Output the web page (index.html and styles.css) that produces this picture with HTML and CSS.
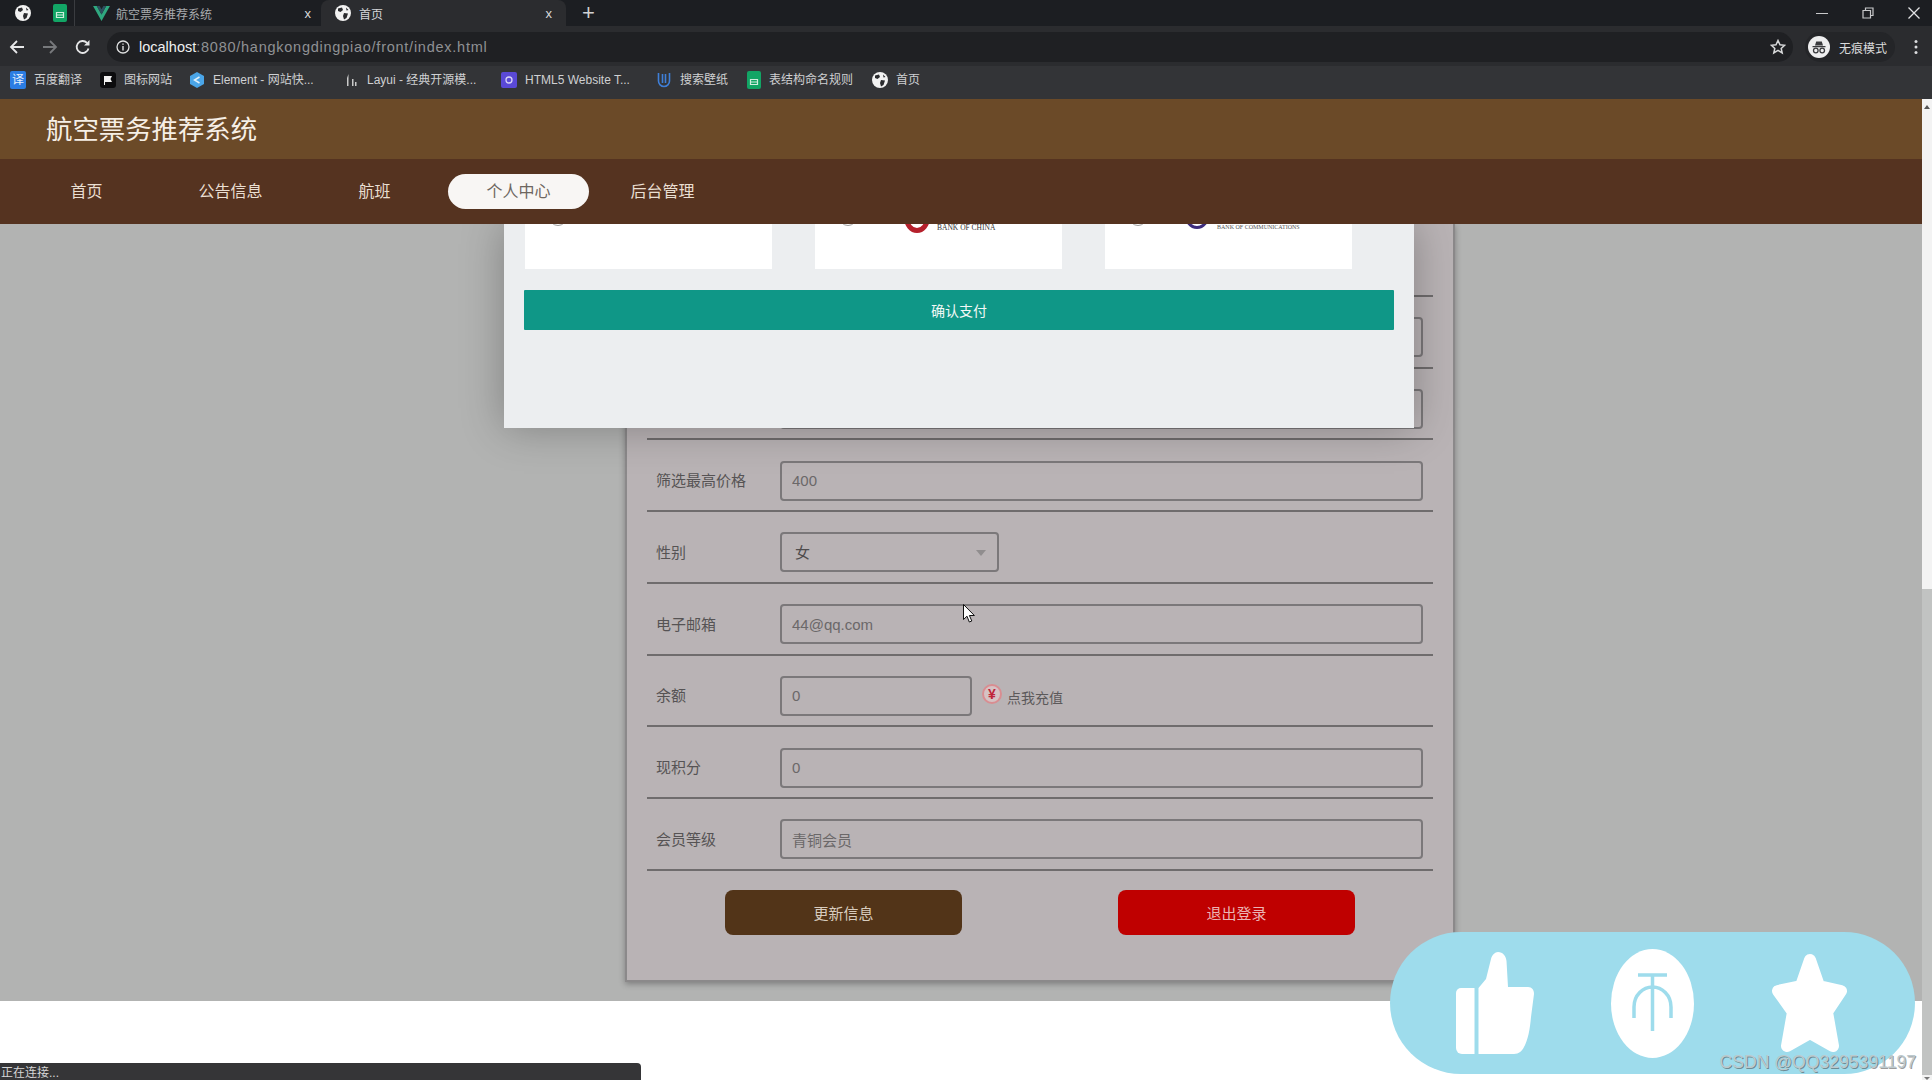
FILE: index.html
```html
<!DOCTYPE html>
<html lang="zh-CN">
<head>
  <meta charset="UTF-8">
  <title>首页</title>
  <link rel="stylesheet" href="styles.css">
</head>
<body>
  <svg class="defs" width="0" height="0">
    <symbol id="globe" viewBox="0 0 16 16">
      <circle cx="8" cy="8" r="8" fill="#f2f2f2"/>
      <path d="M3 3.5 7 2.5 8 5 5.5 7 3 6ZM9 8l4 .5-1.5 4.5-2.5 1.5-1-3.5ZM11 2.5l2.5 2.5-2 .5Z" fill="#2a2b2e"/>
    </symbol>
    <symbol id="sheet" viewBox="0 0 14 18">
      <rect width="14" height="18" rx="2" fill="#12a565"/>
      <path d="M3.5 8.5h7v5h-7z" fill="none" stroke="#cfeedd" stroke-width="1.2"/>
      <path d="M3.5 11h7" stroke="#cfeedd" stroke-width="1"/>
    </symbol>
  </svg>

  <div class="tabstrip">
    <div class="pin pin-first"><svg class="ico16" viewBox="0 0 16 16"><use href="#globe"/></svg></div>
    <div class="pin pin-second"><svg class="ico-sheet" viewBox="0 0 14 18"><use href="#sheet"/></svg></div>
    <div class="tab tab-vue">
      <svg class="ico-vue" viewBox="0 0 18 16"><path d="M0 0h4l5 9 5-9h4L9 16Z" fill="#2fa87f"/><path d="M4 0h3l2 3.5L11 0h3L9 9Z" fill="#2d4f5e"/></svg>
      <span class="tab-title">航空票务推荐系统</span>
      <span class="tab-close">x</span>
    </div>
    <div class="tab tab-active">
      <svg class="ico16" viewBox="0 0 16 16"><use href="#globe"/></svg>
      <span class="tab-title tab-title-active">首页</span>
      <span class="tab-close">x</span>
    </div>
    <div class="tab-new">+</div>
    <div class="win-controls">
      <svg class="win-btn" viewBox="0 0 12 12"><path d="M0 6.500h12" stroke="#c8c9cb" stroke-width="1"/></svg>
      <svg class="win-btn" viewBox="0 0 12 12"><path d="M1 3.500h7.500v7.500H1zM3.500 3.500V1H11v7.500H8.500" fill="none" stroke="#c8c9cb" stroke-width="1.200"/></svg>
      <svg class="win-btn" viewBox="0 0 12 12"><path d="M.5.500l11 11M11.500.500l-11 11" stroke="#e2e3e5" stroke-width="1.300"/></svg>
    </div>
  </div>

  <div class="toolbar">
    <svg class="nav-ico" viewBox="0 0 16 16"><path d="M15 8H2M8 2 2 8l6 6" fill="none" stroke="#e6e7e8" stroke-width="1.800"/></svg>
    <svg class="nav-ico" viewBox="0 0 16 16"><path d="M1 8h13M8 2l6 6-6 6" fill="none" stroke="#77797c" stroke-width="1.800"/></svg>
    <svg class="nav-ico" viewBox="0 0 16 16"><path d="M13.500 9.500A6 6 0 1 1 12 3.800" fill="none" stroke="#e6e7e8" stroke-width="1.800"/><path d="M14.500 1v5.500H9z" fill="#e6e7e8"/></svg>
    <div class="addressbar">
      <svg class="info-ico" viewBox="0 0 14 14"><circle cx="7" cy="7" r="6" fill="none" stroke="#dfe0e1" stroke-width="1.300"/><path d="M7 6v4.500M7 3.500v1.300" stroke="#dfe0e1" stroke-width="1.400"/></svg>
      <span class="url"><b>localhost</b><span class="url-rest">:8080/hangkongdingpiao/front/index.html</span></span>
      <svg class="star-ico" viewBox="0 0 16 16"><path d="M8 1.500l2 4.300 4.600.5-3.400 3.100 1 4.600L8 11.300l-4.200 2.700 1-4.600L1.400 6.300 6 5.800Z" fill="none" stroke="#d8d9da" stroke-width="1.500"/></svg>
    </div>
    <div class="incognito">
      <svg class="incog-ico" viewBox="0 0 22 22"><circle cx="11" cy="11" r="11" fill="#eeeeef"/><path d="M7 9.500l1.200-4h5.600l1.200 4zM4.500 10h13v1.200h-13z" fill="#3a3b3e"/><circle cx="7.800" cy="14.500" r="2.300" fill="none" stroke="#3a3b3e" stroke-width="1.300"/><circle cx="14.200" cy="14.500" r="2.300" fill="none" stroke="#3a3b3e" stroke-width="1.300"/></svg>
      <span>无痕模式</span>
    </div>
    <svg class="menu-ico" viewBox="0 0 4 16"><circle cx="2" cy="2.500" r="1.500" fill="#dcdddf"/><circle cx="2" cy="8" r="1.500" fill="#dcdddf"/><circle cx="2" cy="13.500" r="1.500" fill="#dcdddf"/></svg>
  </div>

  <div class="bookmarks">
    <div class="bm bm-1"><span class="bm-fy">译</span><span>百度翻译</span></div>
    <div class="bm bm-2"><svg class="ico16" viewBox="0 0 16 16"><rect width="16" height="16" rx="3" fill="#0c0c0e"/><path d="M4 4h8l-1.500 3L12 10H5v3H4z" fill="#f1f1f1"/></svg><span>图标网站</span></div>
    <div class="bm bm-3"><svg class="ico16" viewBox="0 0 16 16"><path d="M8 0l7 4v8l-7 4-7-4V4z" fill="#4aa5e8"/><path d="M10.500 5 5.500 8l5 3" fill="none" stroke="#dff0fb" stroke-width="1.500"/></svg><span>Element - 网站快...</span></div>
    <div class="bm bm-4"><svg class="ico16" viewBox="0 0 16 16"><path d="M4 14V6l1.500-4v12zM9 14V7h1.500v7zM12 14v-4h1.500v4z" fill="#c9c9c9"/></svg><span>Layui - 经典开源模...</span></div>
    <div class="bm bm-5"><svg class="ico16" viewBox="0 0 16 16"><rect width="16" height="16" rx="2" fill="#5a49d6"/><circle cx="8" cy="8" r="3" fill="none" stroke="#d8d3f7" stroke-width="1.300"/></svg><span>HTML5 Website T...</span></div>
    <div class="bm bm-6"><svg class="ico16" viewBox="0 0 16 16"><path d="M2.500 1v8a5.500 5.500 0 0 0 11 0V1M6.500 2v9M9.500 2v9" fill="none" stroke="#3f7fd8" stroke-width="1.600"/></svg><span>搜索壁纸</span></div>
    <div class="bm bm-7"><svg class="ico-sheet" viewBox="0 0 14 18"><use href="#sheet"/></svg><span>表结构命名规则</span></div>
    <div class="bm"><svg class="ico16" viewBox="0 0 16 16"><use href="#globe"/></svg><span>首页</span></div>
  </div>

  <div class="page">
    <div class="page-main">
      <div class="site-title">航空票务推荐系统</div>
      <div class="site-nav">
        <a class="nav-item">首页</a>
        <a class="nav-item">公告信息</a>
        <a class="nav-item">航班</a>
        <a class="nav-item nav-item-on">个人中心</a>
        <a class="nav-item">后台管理</a>
      </div>

      <div class="content">
        <div class="card">
          <div class="row"></div>
          <div class="row"><input class="field" readonly></div>
          <div class="row"><input class="field" readonly></div>
          <div class="row"><label class="row-label">筛选最高价格</label><input class="field" value="400" readonly></div>
          <div class="row">
            <label class="row-label">性别</label>
            <div class="select-wrap"><select class="field field-select"><option>女</option></select></div>
          </div>
          <div class="row"><label class="row-label">电子邮箱</label><input class="field" value="44@qq.com" readonly></div>
          <div class="row">
            <label class="row-label">余额</label>
            <input class="field field-short" value="0" readonly>
            <span class="yuan">¥</span>
            <span class="recharge">点我充值</span>
          </div>
          <div class="row"><label class="row-label">现积分</label><input class="field" value="0" readonly></div>
          <div class="row"><label class="row-label">会员等级</label><input class="field" value="青铜会员" readonly></div>
          <div class="card-actions">
            <button class="btn btn-brown">更新信息</button>
            <button class="btn btn-red">退出登录</button>
          </div>
          <svg class="cursor" viewBox="0 0 12 19"><path d="M.5.500v15l3.500-3.300 2.300 5.800 2.500-1-2.400-5.500h5z" fill="#fff" stroke="#111" stroke-width="1"/></svg>
        </div>

        <div class="modal">
          <div class="bank-list">
            <div class="bank"><i class="radio"></i></div>
            <div class="bank"><i class="radio"></i><i class="logo-arc logo-arc-red"></i><span class="bank-name">BANK OF CHINA</span></div>
            <div class="bank"><i class="radio"></i><i class="logo-arc logo-arc-blue"></i><span class="bank-name bank-name-small">BANK OF COMMUNICATIONS</span></div>
          </div>
          <button class="pay-btn">确认支付</button>
        </div>
      </div>

      <div class="page-foot"></div>
    </div>

    <div class="scrollbar">
      <span class="arrow-up"></span>
      <div class="scroll-thumb"></div>
      <span class="arrow-down"></span>
    </div>

    <div class="float-bar">
      <svg class="float-thumb" viewBox="0 0 78 102"><path d="M5 36h13.500v66H6a6 6 0 0 1-6-6V41a5 5 0 0 1 5-5Z" fill="#fff"/><path d="M22.500 36 30 27 35 7c1-4 4-7 7-7 5 0 8 4 8.500 9L52 35h20c4 0 6 3 6 7l-3 23c-1 12-3 23-7 30-2 4-5 7-10 7H22.500Z" fill="#fff"/></svg>
      <svg class="float-coin" viewBox="0 0 83 109"><ellipse cx="41.500" cy="54.500" rx="41.500" ry="54.500" fill="#fff"/><path d="M27 26h29M41.500 26v56M23 69V58c0-12 9-20 18.500-20S60 46 60 58v11" fill="none" stroke="#9edcec" stroke-width="3.500"/></svg>
      <svg class="float-star" viewBox="0 0 77 101"><path d="M39 7 48 33 70 38 56 59 62 93 39 80 16 93 22 59 7 38 30 33Z" fill="#fff" stroke="#fff" stroke-width="12" stroke-linejoin="round"/></svg>
    </div>

    <div class="status">正在连接...</div>
    <div class="watermark">CSDN @QQ3295391197</div>
  </div>
</body>
</html>
```
FILE: styles.css
```css
* {
  box-sizing: border-box;
}
html, body {
  margin: 0;
  height: 1080px;
  overflow: hidden;
}
body {
  font-family: "Liberation Sans", "Noto Sans CJK SC", sans-serif;
  background: #fff;
}
.defs {
  position: absolute;
}
.ico16 {
  width: 16px;
  height: 16px;
  flex: none;
}
.ico-sheet {
  width: 14px;
  height: 18px;
  flex: none;
}

/* browser */
.tabstrip {
  height: 26px;
  background: #1c1e22;
  display: flex;
  align-items: center;
  color: #c9cacc;
}
.pin {
  height: 100%;
  display: flex;
  align-items: center;
  justify-content: center;
}
.pin-first {
  width: 46px;
}
.pin-second {
  width: 28px;
}
.tab {
  height: 100%;
  display: flex;
  align-items: center;
}
.tab-vue {
  width: 247px;
  padding: 0 10px 0 18px;
  border-left: 1px solid #3a3c40;
}
.ico-vue {
  width: 17px;
  height: 15px;
  flex: none;
}
.tab-active {
  width: 245px;
  padding: 0 14px 0 14px;
  background: #2b2c2f;
  border-radius: 8px 8px 0 0;
}
.tab-title {
  margin-left: 6px;
  font-size: 12px;
  color: #a9abae;
  flex: 1;
  white-space: nowrap;
}
.tab-title-active {
  margin-left: 8px;
  color: #d5d6d8;
}
.tab-close {
  font-size: 13px;
  color: #d8d9da;
}
.tab-new {
  margin-left: 16px;
  font-size: 22px;
  font-weight: 300;
  line-height: 26px;
  color: #d0d1d3;
}
.win-controls {
  margin-left: auto;
  display: flex;
  gap: 34px;
  padding-right: 12px;
}
.win-btn {
  width: 12px;
  height: 12px;
}
.toolbar {
  height: 40px;
  background: #2b2c2f;
  display: flex;
  align-items: center;
  padding: 2px 8px 0 9px;
}
.nav-ico {
  width: 16px;
  height: 16px;
  margin-right: 17px;
  flex: none;
}
.addressbar {
  margin-left: -1px;
  width: 1686px;
  height: 30px;
  border-radius: 15px;
  background: #1f2023;
  display: flex;
  align-items: center;
  padding: 0 7px 0 9px;
}
.info-ico {
  width: 14px;
  height: 14px;
}
.url {
  margin-left: 9px;
  font-size: 14.500px;
  white-space: nowrap;
}
.url b {
  font-weight: normal;
  color: #eeeff0;
}
.url-rest {
  color: #8f9194;
  letter-spacing: 0.75px;
}
.star-ico {
  margin-left: auto;
  width: 16px;
  height: 16px;
}
.incognito {
  margin-left: 12px;
  width: 90px;
  height: 30px;
  border-radius: 15px;
  background: #242528;
  display: flex;
  align-items: center;
  gap: 9px;
  padding-left: 3px;
  font-size: 12px;
  color: #dadbdc;
  white-space: nowrap;
}
.incog-ico {
  width: 22px;
  height: 22px;
  flex: none;
}
.menu-ico {
  margin-left: 19px;
  width: 4px;
  height: 16px;
  flex: none;
}
.bookmarks {
  height: 33px;
  background: #333437;
  display: flex;
  align-items: center;
  padding: 0 0 5px 10px;
  font-size: 12px;
  line-height: 16px;
  color: #cfd0d2;
}
.bm {
  display: flex;
  align-items: center;
  gap: 8px;
  white-space: nowrap;
}
.bm-fy {
  width: 16px;
  height: 18px;
  border-radius: 2px;
  background: #2b7de3;
  color: #e5f0fc;
  font-size: 12px;
  line-height: 18px;
  text-align: center;
}
.bm-1 { width: 90px; }
.bm-2 { width: 89px; }
.bm-3 { width: 154px; }
.bm-4 { width: 158px; }
.bm-5 { width: 155px; }
.bm-6 { width: 91px; }
.bm-7 { width: 125px; }

/* page */
.page {
  position: relative;
  height: 981px;
  display: flex;
  overflow: hidden;
}
.page-main {
  flex: 1;
  min-width: 0;
}
.site-title {
  height: 60px;
  background: #6b4a28;
  padding: 2px 0 0 46px;
  color: #f6efe6;
  font-size: 26.400px;
  line-height: 58px;
}
.site-nav {
  height: 65px;
  background: #553320;
  display: flex;
  align-items: center;
  gap: 3px;
  padding-left: 16px;
  position: relative;
  z-index: 3;
}
.nav-item {
  width: 141px;
  height: 35px;
  border-radius: 18px;
  color: #eadfd2;
  font-size: 16px;
  line-height: 35px;
  text-align: center;
}
.nav-item-on {
  background: #f8f6f4;
  color: #6d6660;
}
.content {
  position: relative;
  height: 777px;
  background: #b2b3b2;
  padding-left: 625px;
}
.card {
  position: relative;
  width: 830px;
  height: 758px;
  background: #b9b3b5;
  border-left: 2px solid #8b898a;
  border-right: 2px solid #8b898a;
  border-bottom: 2px solid #8b898a;
  box-shadow: 0 2px 6px rgba(0, 0, 0, 0.3);
  padding: 1px 20px 0;
}
.row {
  height: 71.750px;
  border-bottom: 2px solid #6f6c6d;
  display: flex;
  align-items: center;
  padding: 11px 10px 0 0;
  justify-content: flex-end;
}
.row:has(.row-label) {
  justify-content: flex-start;
}
.row-label {
  width: 133px;
  padding: 0 0 2px 9px;
  flex: none;
  font-size: 15px;
  color: #565354;
  white-space: nowrap;
}
.field {
  width: 643px;
  height: 40px;
  border: 2px solid #7b787a;
  border-radius: 4px;
  background: transparent;
  padding: 0 10px;
  font-family: inherit;
  font-size: 15px;
  color: #6b6869;
  outline: none;
}
.select-wrap {
  position: relative;
  width: 219px;
}
.select-wrap::after {
  content: "";
  position: absolute;
  right: 13px;
  top: 18px;
  border: 5px solid transparent;
  border-top: 6px solid #908d8e;
  border-bottom: 0;
}
.field-select {
  width: 100%;
  padding-left: 13px;
  appearance: none;
  color: #4f4c4d;
}
.field-short {
  width: 192px;
}
.yuan {
  margin-left: 10px;
  width: 20px;
  height: 20px;
  border-radius: 50%;
  border: 2px solid #d98d91;
  background: #d6c2c4;
  color: #c0243a;
  font-size: 14px;
  font-weight: bold;
  line-height: 16px;
  text-align: center;
  flex: none;
  margin-top: -3px;
}
.recharge {
  margin-left: 5px;
  margin-top: 3px;
  font-size: 14px;
  color: #5c595a;
}
.card-actions {
  display: flex;
  justify-content: center;
  gap: 156px;
  padding-top: 19px;
}
.btn {
  width: 237px;
  height: 45px;
  border: none;
  border-radius: 8px;
  font-family: inherit;
  font-size: 15px;
}
.btn-brown {
  background: #523418;
  color: #d8ccbe;
}
.btn-red {
  background: #bf0000;
  color: #ebb4b4;
}
.cursor {
  position: absolute;
  left: 336px;
  top: 380px;
  width: 12px;
  height: 19px;
}
.modal {
  position: absolute;
  left: 504px;
  top: 0;
  width: 910px;
  height: 204px;
  background: #eceef0;
  box-shadow: 0 0 40px rgba(0, 0, 0, 0.28);
  padding: 0 20px;
}
.bank-list {
  display: flex;
  gap: 43px;
  padding-left: 1px;
  margin-bottom: 21px;
}
.bank {
  position: relative;
  width: 247px;
  height: 45px;
  background: #fff;
  overflow: hidden;
}
.radio {
  position: absolute;
  left: 24px;
  top: -16px;
  width: 18px;
  height: 18px;
  border: 1px solid #9b9b9b;
  border-radius: 50%;
}
.logo-arc {
  position: absolute;
  top: -22px;
  width: 26px;
  height: 31px;
  border-radius: 50%;
}
.logo-arc-red {
  left: 89px;
  border: 5px solid #b5202c;
}
.logo-arc-blue {
  left: 79px;
  top: -26px;
  border: 3px solid #3c2c7c;
}
.bank-name {
  position: absolute;
  left: 122px;
  top: 0;
  font-family: "Liberation Serif", serif;
  font-size: 7.500px;
  line-height: 8px;
  color: #333;
  white-space: nowrap;
}
.bank-name-small {
  left: 112px;
  font-size: 6px;
  line-height: 7px;
  color: #555;
}
.pay-btn {
  display: block;
  width: 870px;
  height: 40px;
  border: none;
  border-radius: 1px;
  background: #0f9787;
  color: #f2f8f6;
  font-family: inherit;
  font-size: 14px;
}
.page-foot {
  height: 79px;
  background: #fff;
}
.scrollbar {
  flex: none;
  width: 10px;
  background: #f3f3f3;
  display: flex;
  flex-direction: column;
  align-items: center;
  position: relative;
}
.arrow-up {
  margin-top: 6px;
  border: 3px solid transparent;
  border-bottom: 4px solid #555;
  border-top: 0;
}
.scroll-thumb {
  margin-top: 480px;
  width: 100%;
  height: 486px;
  background: #c1c3c2;
}
.arrow-down {
  margin-top: 2px;
  border: 3px solid transparent;
  border-top: 3px solid #777;
  border-bottom: 0;
}
.float-bar {
  position: absolute;
  left: 1390px;
  top: 833px;
  width: 525px;
  height: 142px;
  border-radius: 71px;
  background: #9edcec;
  display: flex;
  align-items: center;
  padding-left: 66px;
  z-index: 4;
}
.float-thumb {
  width: 78px;
  height: 102px;
  flex: none;
}
.float-coin {
  margin-left: 77px;
  width: 83px;
  height: 109px;
  flex: none;
}
.float-star {
  margin-left: 77px;
  width: 77px;
  height: 101px;
  flex: none;
}
.status {
  position: absolute;
  left: 0;
  bottom: 0;
  width: 641px;
  height: 17px;
  background: #353537;
  border-radius: 0 4px 0 0;
  color: #d5d5d6;
  font-size: 12px;
  line-height: 17px;
  padding: 2px 0 0 1px;
  z-index: 4;
}
.watermark {
  position: absolute;
  right: 16px;
  bottom: 8px;
  font-size: 17.600px;
  line-height: 20px;
  color: #bcc9cd;
  text-shadow: 1px 1px 0 rgba(70, 70, 70, 0.55);
  white-space: nowrap;
  z-index: 5;
}
```
